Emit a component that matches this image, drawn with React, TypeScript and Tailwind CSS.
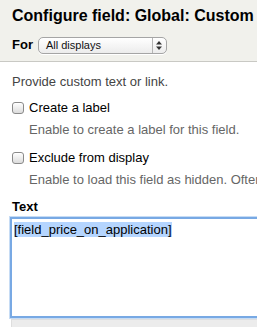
const Checkbox = () => (
  <span className="inline-block h-[12px] w-[12px] shrink-0 rounded-[3px] border border-[#8a8a8a] bg-gradient-to-b from-white to-[#dcdcdc] shadow-[inset_0_1px_0_#fff]" />
);

const SelectBox = ({ value }: { value: string }) => (
  <div className="flex h-[17px] w-[129px] items-center rounded-[5px] border border-[#a5a5a5] bg-gradient-to-b from-white to-[#ececec] shadow-[0_1px_0_#fff]">
    <span className="flex-1 pl-[7px] text-[11px] leading-[15px] text-[#111]">{value}</span>
    <span className="flex h-full w-[14px] items-center justify-center border-l border-[#b5b5b5]">
      <svg width="6" height="9" viewBox="0 0 6 9">
        <path d="M3 0 L6 3.5 H0 Z" fill="#333" />
        <path d="M3 9 L6 5.5 H0 Z" fill="#333" />
      </svg>
    </span>
  </div>
);

export default function App() {
  return (
    <div className="h-[327px] w-[257px] overflow-hidden bg-white font-['Liberation_Sans',Arial,sans-serif] text-[13px] text-[#222]">
      <header className="border-b border-[#c9c9c4] bg-[#f1f1ec] px-[12px] pb-[7px] pt-[6px]">
        <h1 className="whitespace-nowrap text-[16px] font-bold leading-[20px] text-black">
          Configure field: Global: Custom text
        </h1>
        <div className="mt-[10px] flex h-[18px] items-center gap-[5px]">
          <span className="text-[13px] font-bold leading-[16px] text-black">For</span>
          <SelectBox value="All displays" />
        </div>
      </header>

      <div className="pl-[12px] pt-[12px]">
        <p className="whitespace-nowrap leading-[16px] text-[#444]">Provide custom text or link.</p>

        <label className="mt-[10px] flex h-[16px] items-center gap-[5px] whitespace-nowrap leading-[16px] text-black">
          <Checkbox />
          Create a label
        </label>
        <p className="mt-[6px] whitespace-nowrap pl-[17px] leading-[16px] text-[#666]">
          Enable to create a label for this field.
        </p>

        <label className="mt-[12px] flex h-[16px] items-center gap-[5px] whitespace-nowrap leading-[16px] text-black">
          <Checkbox />
          Exclude from display
        </label>
        <p className="mt-[6px] whitespace-nowrap pl-[17px] leading-[16px] text-[#666]">
          Enable to load this field as hidden. Often used to group fields.
        </p>

        <div className="mt-[11px] font-bold leading-[16px] text-black">Text</div>

        <div className="-ml-[2px] mt-[2px] h-[101px] w-[300px] border-2 border-[#78a9e4] bg-white px-[2px] pt-[1px] shadow-[0_0_0_1px_#c6dcf5]">
          <span className="whitespace-nowrap bg-[#b5d5fe] leading-[15px] text-black">[field_price_on_application]</span>
        </div>
        <div className="-ml-[1px] mt-[1px] h-[9px] w-[300px] border border-[#dedede] bg-[#ececec]" />
      </div>
    </div>
  );
}
